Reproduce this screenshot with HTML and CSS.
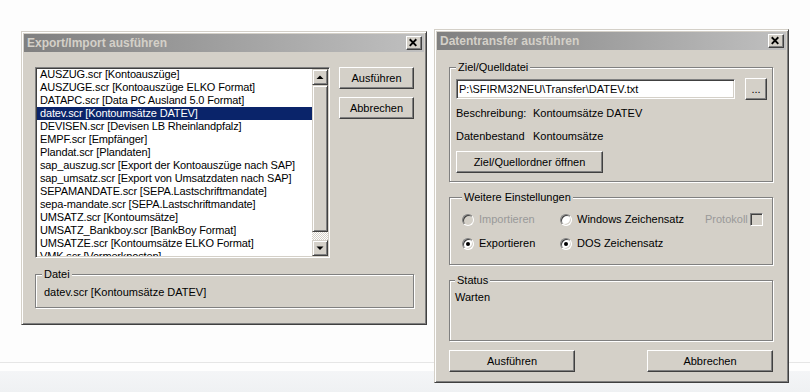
FILE: index.html
```html
<!DOCTYPE html>
<html lang="de">
<head>
    <meta charset="UTF-8">
    <meta name="viewport" content="width=device-width, initial-scale=1.0">
    <title>Datentransfer</title>
    <link rel="stylesheet" href="styles.css">
</head>
<body>
    <div class="desktop">

        <!-- Export/Import dialog -->
        <div class="window window-export">
            <div class="titlebar">
                <span class="title">Export/Import ausführen</span>
                <button class="close-btn">
                    <svg width="16" height="14" viewBox="0 0 16 14"><path d="M4 3 L11 10 M11 3 L4 10" stroke="#000" stroke-width="2" fill="none"/></svg>
                </button>
            </div>
            <div class="window-body">
                <div class="list-row">
                    <div class="listbox">
                        <ul class="list-items">
                            <li>AUSZUG.scr [Kontoauszüge]</li>
                            <li>AUSZUGE.scr [Kontoauszüge ELKO Format]</li>
                            <li>DATAPC.scr [Data PC Ausland 5.0 Format]</li>
                            <li class="selected">datev.scr [Kontoumsätze DATEV]</li>
                            <li>DEVISEN.scr [Devisen LB Rheinlandpfalz]</li>
                            <li>EMPF.scr [Empfänger]</li>
                            <li>Plandat.scr [Plandaten]</li>
                            <li>sap_auszug.scr [Export der Kontoauszüge nach SAP]</li>
                            <li>sap_umsatz.scr [Export von Umsatzdaten nach SAP]</li>
                            <li>SEPAMANDATE.scr [SEPA.Lastschriftmandate]</li>
                            <li>sepa-mandate.scr [SEPA.Lastschriftmandate]</li>
                            <li>UMSATZ.scr [Kontoumsätze]</li>
                            <li>UMSATZ_Bankboy.scr [BankBoy Format]</li>
                            <li>UMSATZE.scr [Kontoumsätze ELKO Format]</li>
                            <li>VMK.scr [Vormerkposten]</li>
                        </ul>
                        <div class="scrollbar">
                            <div class="sb-btn">
                                <svg width="14" height="14" viewBox="0 0 14 14"><polygon points="3.5,9 10.5,9 7,5.5" fill="#000"/></svg>
                            </div>
                            <div class="sb-thumb"></div>
                            <div class="sb-track"></div>
                            <div class="sb-btn">
                                <svg width="14" height="14" viewBox="0 0 14 14"><polygon points="3.5,5.5 10.5,5.5 7,9" fill="#000"/></svg>
                            </div>
                        </div>
                    </div>
                    <div class="side-buttons">
                        <button class="btn">Ausführen</button>
                        <button class="btn">Abbrechen</button>
                    </div>
                </div>
                <fieldset class="group group-file">
                    <legend>Datei</legend>
                    <div class="file-name">datev.scr [Kontoumsätze DATEV]</div>
                </fieldset>
            </div>
        </div>

        <!-- Datentransfer dialog -->
        <div class="window window-transfer">
            <div class="titlebar">
                <span class="title">Datentransfer ausführen</span>
                <button class="close-btn">
                    <svg width="16" height="14" viewBox="0 0 16 14"><path d="M4 3 L11 10 M11 3 L4 10" stroke="#000" stroke-width="2" fill="none"/></svg>
                </button>
            </div>
            <div class="window-body transfer-body">
                <fieldset class="group group-target">
                    <legend>Ziel/Quelldatei</legend>
                    <div class="path-row">
                        <input type="text" class="text-input" value="P:\SFIRM32NEU\Transfer\DATEV.txt">
                        <button class="btn btn-browse">...</button>
                    </div>
                    <div class="info-row">
                        <span>Beschreibung:</span>
                        <span>Kontoumsätze DATEV</span>
                    </div>
                    <div class="info-row">
                        <span>Datenbestand</span>
                        <span>Kontoumsätze</span>
                    </div>
                    <button class="btn btn-folder">Ziel/Quellordner öffnen</button>
                </fieldset>

                <fieldset class="group group-settings">
                    <legend>Weitere Einstellungen</legend>
                    <div class="options-grid">
                        <label class="option disabled"><span class="radio"></span>Importieren</label>
                        <label class="option"><span class="radio"></span>Windows Zeichensatz</label>
                        <label class="option option-check disabled">Protokoll<span class="checkbox"></span></label>
                        <label class="option"><span class="radio checked"></span>Exportieren</label>
                        <label class="option"><span class="radio checked"></span>DOS Zeichensatz</label>
                    </div>
                </fieldset>

                <fieldset class="group group-status">
                    <legend>Status</legend>
                    <div class="status-text">Warten</div>
                </fieldset>

                <div class="bottom-buttons">
                    <button class="btn btn-wide">Ausführen</button>
                    <button class="btn btn-wide">Abbrechen</button>
                </div>
            </div>
        </div>

    </div>
</body>
</html>
```

FILE: styles.css
```css
* {
    margin: 0;
    padding: 0;
    box-sizing: border-box;
}

body {
    font-family: 'Liberation Sans', Arial, sans-serif;
    font-size: 11px;
    color: #000;
    background: linear-gradient(to bottom,
        #fdfdfd 0, #fdfdfd 362px,
        #e6e6e6 362px, #e6e6e6 363px,
        #fefefe 363px, #fefefe 371px,
        #f4f5f7 371px, #eff1f3 392px);
    min-height: 100vh;
}

.desktop {
    position: relative;
    width: 810px;
    height: 392px;
    overflow: hidden;
}

/* Classic window frame */
.window {
    position: absolute;
    background-color: #d4d0c8;
    border: 1px solid;
    border-color: #d4d0c8 #404040 #404040 #d4d0c8;
    box-shadow: inset 1px 1px 0 #fff, inset -1px -1px 0 #808080;
    padding: 2px;
    display: flex;
    flex-direction: column;
}

.window-export {
    left: 21px;
    top: 31px;
    width: 406px;
    height: 294px;
}

.window-transfer {
    left: 434px;
    top: 29px;
    width: 355px;
    height: 354px;
}

.titlebar {
    height: 18px;
    display: flex;
    align-items: center;
    justify-content: space-between;
    padding: 0 2px 0 3px;
    background: linear-gradient(to right, #808080, #c0c0c0);
}

.title {
    font-weight: bold;
    color: #d4d0c8;
    font-size: 12px;
}

.close-btn {
    width: 16px;
    height: 14px;
    background-color: #d4d0c8;
    border: 1px solid;
    border-color: #fff #404040 #404040 #fff;
    box-shadow: inset -1px -1px 0 #808080;
    display: flex;
    align-items: center;
    justify-content: center;
}

.close-btn svg {
    display: block;
    margin: -1px 0 0 -1px;
}

.window-body {
    padding: 15px 10px 0 11px;
}

/* Buttons */
.btn {
    font-family: inherit;
    font-size: 11px;
    color: #000;
    background-color: #d4d0c8;
    border: 1px solid;
    border-color: #fff #404040 #404040 #fff;
    box-shadow: inset -1px -1px 0 #808080;
    height: 22px;
}

/* Left dialog: list and buttons */
.list-row {
    display: flex;
    gap: 9px;
}

.listbox {
    width: 295px;
    height: 191px;
    display: flex;
    background-color: #fff;
    border: 1px solid;
    border-color: #808080 #fff #fff #808080;
    box-shadow: inset 1px 1px 0 #404040, inset -1px -1px 0 #d4d0c8;
    padding: 1px;
}

.list-items {
    list-style: none;
    flex: 1;
    overflow: hidden;
    margin-top: -1px;
}

.list-items li {
    line-height: 13px;
    height: 13px;
    padding-left: 3px;
    white-space: nowrap;
    letter-spacing: -0.15px;
}

.list-items li.selected {
    background-color: #0a246a;
    color: #fff;
}

.scrollbar {
    width: 16px;
    display: flex;
    flex-direction: column;
}

.sb-btn,
.sb-thumb {
    background-color: #d4d0c8;
    border: 1px solid;
    border-color: #d4d0c8 #404040 #404040 #d4d0c8;
    box-shadow: inset 1px 1px 0 #fff, inset -1px -1px 0 #808080;
}

.sb-btn {
    height: 16px;
    display: flex;
    align-items: center;
    justify-content: center;
}

.sb-btn svg {
    display: block;
}

.sb-thumb {
    height: 147px;
}

.sb-track {
    flex: 1;
    background: repeating-conic-gradient(#fff 0 25%, #d4d0c8 0 50%) 0 0 / 2px 2px;
}

.side-buttons {
    display: flex;
    flex-direction: column;
    gap: 8px;
}

.side-buttons .btn {
    width: 75px;
}

/* Etched group boxes */
.group {
    border: 1px solid #808080;
    box-shadow: 1px 1px 0 #fff, inset 1px 1px 0 #fff;
    padding: 0 6px 8px 6px;
    min-width: 0;
}

.group legend {
    line-height: 13px;
    padding: 0 2px;
    margin-left: 0;
    background-color: #d4d0c8;
}

.group-file {
    margin-top: 10px;
    width: 379px;
    padding-top: 5px;
    padding-bottom: 8px;
}

.file-name {
    line-height: 13px;
    padding-left: 2px;
}

/* Right dialog */
.transfer-body {
    padding: 11px 13px 0 12px;
}

.group-target {
    padding: 4px 5px 8px 6px;
}

.path-row {
    display: flex;
    align-items: center;
    gap: 10px;
    height: 22px;
}

.text-input {
    width: 280px;
    height: 20px;
    font-family: inherit;
    font-size: 11px;
    padding-left: 2px;
    background-color: #fff;
    border: 1px solid;
    border-color: #808080 #fff #fff #808080;
    box-shadow: inset 1px 1px 0 #404040, inset -1px -1px 0 #d4d0c8;
    outline: none;
}

.btn-browse {
    width: 22px;
    height: 22px;
    line-height: 1;
}

.info-row {
    display: grid;
    grid-template-columns: 77px auto;
    line-height: 13px;
    margin-top: 7px;
}

.info-row + .info-row {
    margin-top: 10px;
}

.btn-folder {
    width: 147px;
    margin-top: 8px;
}

.group-settings {
    margin-top: 9px;
    padding: 9px 6px 14px 12px;
}

.options-grid {
    display: grid;
    grid-template-columns: 98px 145px auto;
    row-gap: 11px;
}

.option {
    display: flex;
    align-items: center;
    gap: 5px;
    line-height: 13px;
    height: 13px;
    white-space: nowrap;
}

.option.disabled {
    color: #999;
}

.option-check {
    gap: 2px;
}

.radio {
    width: 12px;
    height: 12px;
    border-radius: 50%;
    background-color: #fff;
    border: 1px solid;
    border-color: #808080 #fff #fff #808080;
    box-shadow: inset 1px 1px 0 #404040, inset -1px -1px 0 #d4d0c8;
    display: flex;
    align-items: center;
    justify-content: center;
}

.disabled .radio {
    background-color: #d4d0c8;
}

.radio.checked::after {
    content: "";
    width: 4px;
    height: 4px;
    border-radius: 50%;
    background-color: #000;
}

.checkbox {
    width: 13px;
    height: 13px;
    background-color: #d4d0c8;
    border: 1px solid;
    border-color: #808080 #fff #fff #808080;
    box-shadow: inset 1px 1px 0 #404040, inset -1px -1px 0 #d4d0c8;
}

.group-status {
    margin-top: 9px;
    padding: 4px 5px 0 5px;
}

.status-text {
    line-height: 13px;
    height: 49px;
}

.bottom-buttons {
    display: flex;
    justify-content: space-between;
    margin-top: 9px;
}

.btn-wide {
    width: 126px;
}
```
